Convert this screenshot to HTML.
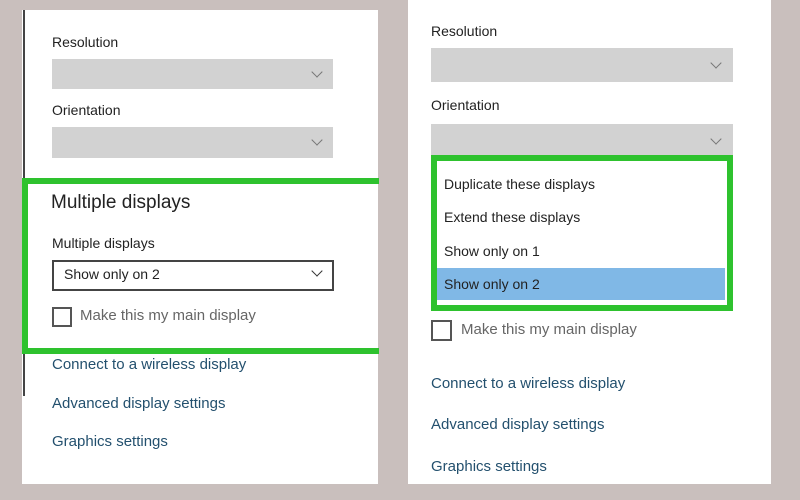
<!DOCTYPE html><html><head><style>
body{margin:0;width:800px;height:500px;background:#c9bfbd;position:relative;overflow:hidden;font-family:"Liberation Sans",sans-serif;color:#222}
.a{position:absolute}
.p{background:#fff}
.t{position:absolute;font-size:14px;line-height:16px;white-space:nowrap}
.dd{position:absolute;background:#d2d2d2}
.chev{position:absolute;width:7px;height:7px;border-right:1px solid #777;border-bottom:1px solid #777;transform:rotate(45deg)}
.l{color:#23506e;font-size:15px}
.cb{position:absolute;width:17px;height:17px;border:2px solid #555;background:#fff}
.g{color:#666;font-size:15px}
</style></head><body>
<div class="a p" style="left:22px;top:10px;width:356px;height:474px"></div>
<div class="a" style="left:23px;top:10px;width:2px;height:168px;background:#444"></div>
<div class="a" style="left:23px;top:348px;width:2px;height:48px;background:#444"></div>
<div class="t" style="left:52px;top:34px">Resolution</div>
<div class="dd" style="left:52px;top:59px;width:281px;height:30px"></div><div class="chev" style="left:313px;top:68px"></div>
<div class="t" style="left:52px;top:102px">Orientation</div>
<div class="dd" style="left:52px;top:127px;width:281px;height:31px"></div><div class="chev" style="left:313px;top:136px"></div>
<div class="a" style="left:22px;top:178px;width:351px;height:164px;border:6px solid #2ec22e;border-right:none"></div>
<div class="t" style="left:51px;top:192px;font-size:19px;line-height:22px">Multiple displays</div>
<div class="t" style="left:52px;top:235px">Multiple displays</div>
<div class="a" style="left:52px;top:260px;width:278px;height:27px;border:2px solid #444;background:#fff"></div>
<div class="t" style="left:64px;top:266px">Show only on 2</div><div class="chev" style="left:313px;top:267px;border-color:#333"></div>
<div class="cb" style="left:52px;top:307px;width:16px;height:16px"></div>
<div class="t g" style="left:80px;top:308px">Make this my main display</div>
<div class="t l" style="left:52px;top:357px">Connect to a wireless display</div>
<div class="t l" style="left:52px;top:396px">Advanced display settings</div>
<div class="t l" style="left:52px;top:434px">Graphics settings</div>

<div class="a p" style="left:408px;top:0;width:363px;height:484px"></div>
<div class="t" style="left:431px;top:23px">Resolution</div>
<div class="dd" style="left:431px;top:48px;width:302px;height:34px"></div><div class="chev" style="left:712px;top:59px"></div>
<div class="t" style="left:431px;top:97px">Orientation</div>
<div class="dd" style="left:431px;top:124px;width:302px;height:34px"></div><div class="chev" style="left:712px;top:135px"></div>
<div class="a" style="left:431px;top:155px;width:290px;height:144px;border:6px solid #2ec22e;background:#fff"></div>
<div class="a" style="left:437px;top:268px;width:288px;height:32px;background:#80b8e6"></div>
<div class="t" style="left:444px;top:176px">Duplicate these displays</div>
<div class="t" style="left:444px;top:209px">Extend these displays</div>
<div class="t" style="left:444px;top:243px">Show only on 1</div>
<div class="t" style="left:444px;top:276px">Show only on 2</div>
<div class="cb" style="left:431px;top:320px"></div>
<div class="t g" style="left:461px;top:322px">Make this my main display</div>
<div class="t l" style="left:431px;top:376px">Connect to a wireless display</div>
<div class="t l" style="left:431px;top:417px">Advanced display settings</div>
<div class="t l" style="left:431px;top:459px">Graphics settings</div>
</body></html>
